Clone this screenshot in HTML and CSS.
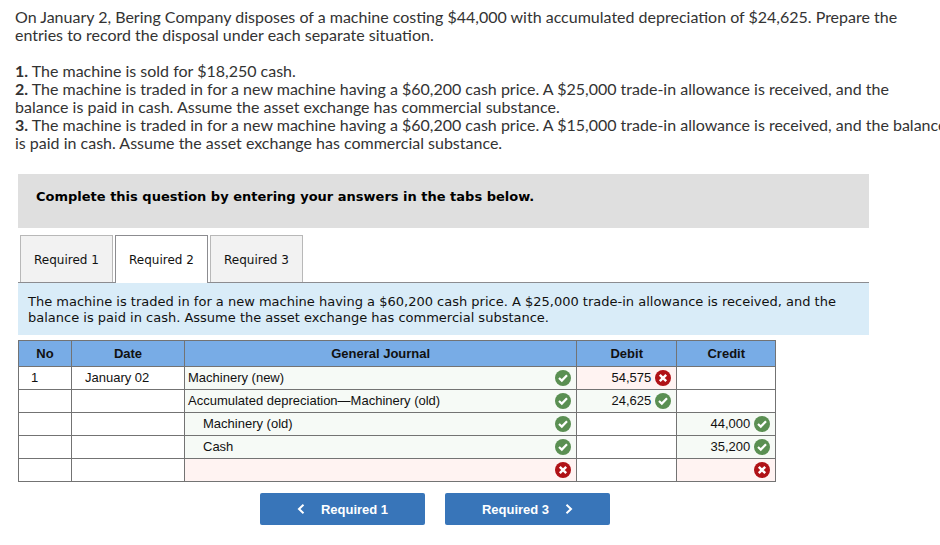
FILE: index.html
```html
<!DOCTYPE html>
<html lang="en">

<head>
    <meta charset="UTF-8">
    <meta name="viewport" content="width=device-width, initial-scale=1.0">
    <title>Bering Company - Required 2</title>
    <link rel="stylesheet" href="styles.css">
</head>

<body>
    <!-- shared icons -->
    <svg class="icon-defs" aria-hidden="true">
        <symbol id="icon-right" viewBox="0 0 16 16">
            <circle cx="8" cy="8" r="8" fill="#5a8f52" />
            <path d="M4 8 L6.8 10.6 L12 5.2" fill="none" stroke="#fff" stroke-width="2.2" />
        </symbol>
        <symbol id="icon-wrong" viewBox="0 0 16 16">
            <circle cx="8" cy="8" r="8" fill="#b01217" />
            <path d="M4.8 4.8 L11.2 11.2 M11.2 4.8 L4.8 11.2" fill="none" stroke="#fff" stroke-width="2.4" />
        </symbol>
    </svg>

    <div class="intro">
        <p>On January 2, Bering Company disposes of a machine costing $44,000 with accumulated depreciation of $24,625. Prepare the<br>
            entries to record the disposal under each separate situation.</p>
        <p><b>1.</b> The machine is sold for $18,250 cash.<br>
            <b>2.</b> The machine is traded in for a new machine having a $60,200 cash price. A $25,000 trade-in allowance is received, and the<br>
            balance is paid in cash. Assume the asset exchange has commercial substance.<br>
            <b>3.</b> The machine is traded in for a new machine having a $60,200 cash price. A $15,000 trade-in allowance is received, and the balance<br>
            is paid in cash. Assume the asset exchange has commercial substance.</p>
    </div>

    <main class="question">
        <h2 class="question-title">Complete this question by entering your answers in the tabs below.</h2>

        <div class="tabs" role="tablist">
            <button type="button" class="tab" role="tab">Required 1</button>
            <button type="button" class="tab active" role="tab" aria-selected="true">Required 2</button>
            <button type="button" class="tab" role="tab">Required 3</button>
        </div>

        <p class="prompt">The machine is traded in for a new machine having a $60,200 cash price. A $25,000 trade-in allowance is received, and the balance is paid in cash. Assume the asset exchange has commercial substance.</p>

        <table class="journal">
            <colgroup>
                <col class="col-no">
                <col class="col-date">
                <col>
                <col class="col-debit">
                <col class="col-credit">
            </colgroup>
            <thead>
                <tr>
                    <th>No</th>
                    <th>Date</th>
                    <th>General Journal</th>
                    <th>Debit</th>
                    <th>Credit</th>
                </tr>
            </thead>
            <tbody>
                <tr>
                    <td class="no">1</td>
                    <td class="date">January 02</td>
                    <td class="right"><div class="entry"><span>Machinery (new)</span><svg class="mark"><use href="#icon-right" /></svg></div></td>
                    <td class="wrong"><div class="entry amount"><span>54,575</span><svg class="mark"><use href="#icon-wrong" /></svg></div></td>
                    <td></td>
                </tr>
                <tr>
                    <td></td>
                    <td></td>
                    <td class="right"><div class="entry"><span>Accumulated depreciation—Machinery (old)</span><svg class="mark"><use href="#icon-right" /></svg></div></td>
                    <td class="right"><div class="entry amount"><span>24,625</span><svg class="mark"><use href="#icon-right" /></svg></div></td>
                    <td></td>
                </tr>
                <tr>
                    <td></td>
                    <td></td>
                    <td class="right"><div class="entry indent"><span>Machinery (old)</span><svg class="mark"><use href="#icon-right" /></svg></div></td>
                    <td></td>
                    <td class="right"><div class="entry amount"><span>44,000</span><svg class="mark"><use href="#icon-right" /></svg></div></td>
                </tr>
                <tr>
                    <td></td>
                    <td></td>
                    <td class="right"><div class="entry indent"><span>Cash</span><svg class="mark"><use href="#icon-right" /></svg></div></td>
                    <td></td>
                    <td class="right"><div class="entry amount"><span>35,200</span><svg class="mark"><use href="#icon-right" /></svg></div></td>
                </tr>
                <tr>
                    <td></td>
                    <td></td>
                    <td class="wrong"><div class="entry"><span></span><svg class="mark"><use href="#icon-wrong" /></svg></div></td>
                    <td></td>
                    <td class="wrong"><div class="entry amount"><span></span><svg class="mark"><use href="#icon-wrong" /></svg></div></td>
                </tr>
            </tbody>
        </table>

        <div class="pager">
            <button type="button" class="pager-btn">
                <svg class="arrow" viewBox="0 0 8 10"><path d="M6.5 0.8 L2 5 L6.5 9.2" /></svg>
                Required 1
            </button>
            <button type="button" class="pager-btn">
                Required 3
                <svg class="arrow" viewBox="0 0 8 10"><path d="M1.5 0.8 L6 5 L1.5 9.2" /></svg>
            </button>
        </div>
    </main>
</body>

</html>
```
FILE: styles.css
```css
* {
    margin: 0;
    padding: 0;
    box-sizing: border-box;
}

body {
    background: #fff;
    color: #111;
    font-family: "DejaVu Sans", Verdana, sans-serif;
    font-size: 13px;
    overflow-x: hidden;
}

.icon-defs {
    display: none;
}

/* problem text */
.intro {
    padding: 8px 0 0 15px;
    color: #333;
    font-family: Lato, sans-serif;
    font-size: 16px;
    line-height: 18px;
    white-space: nowrap;
    overflow: hidden;
}

.intro p {
    margin-bottom: 18px;
}

/* question panel */
.question {
    margin: 4px 71px 0 18px;
}

.question-title {
    padding: 15px 18px 23px;
    background: #dfdfdf;
    color: #000;
    font-size: 13px;
    line-height: 16px;
}

.tabs {
    display: flex;
    gap: 2px;
    margin-top: 7px;
    padding-left: 2px;
    border-bottom: 1px solid #8c8c90;
}

.tab {
    width: 93px;
    height: 47px;
    padding-top: 1px;
    border: 1px solid #b8b8b8;
    border-bottom: none;
    background: #f2f2f2;
    color: #111;
    font-family: inherit;
    font-size: 12px;
    cursor: pointer;
}

.tab.active {
    height: 48px;
    margin-bottom: -1px;
    border-color: #8c8c90;
    background: #fff;
}

.prompt {
    padding: 11px 10px 9px;
    background: #d9ecf8;
    line-height: 16px;
}

/* journal table */
.journal {
    width: 89.1%;
    margin-top: 5px;
    border-collapse: collapse;
    table-layout: fixed;
    font-family: "Liberation Sans", Arial, sans-serif;
    font-size: 13px;
}

.journal th,
.journal td {
    height: 23px;
    border: 1px solid #737373;
    line-height: 16px;
}

.journal th {
    height: 26px;
    background: #78ace6;
}

.col-no {
    width: 53px;
}

.col-date {
    width: 113px;
}

.col-debit {
    width: 100px;
}

.col-credit {
    width: 99px;
}

.journal .no {
    padding-left: 12px;
}

.journal .date {
    padding-left: 13px;
}

.journal .right {
    background: #f6faf6;
}

.journal .wrong {
    background: #fff3f2;
}

.entry {
    display: flex;
    align-items: center;
    justify-content: space-between;
    padding: 0 5px 0 3px;
}

.entry.indent {
    padding-left: 18px;
}

.entry.amount {
    justify-content: flex-end;
    gap: 4px;
}

.mark {
    width: 16px;
    height: 16px;
}

/* previous / next */
.pager {
    display: flex;
    justify-content: center;
    gap: 20px;
    margin-top: 11px;
    padding-right: 17px;
}

.pager-btn {
    display: flex;
    align-items: center;
    justify-content: center;
    gap: 16px;
    width: 165px;
    height: 32px;
    border: none;
    border-radius: 2px;
    background: #3875b9;
    color: #fff;
    font-family: "Liberation Sans", Arial, sans-serif;
    font-size: 13px;
    font-weight: bold;
    cursor: pointer;
}

.arrow {
    width: 8px;
    height: 10px;
    fill: none;
    stroke: #fff;
    stroke-width: 2;
}
```
